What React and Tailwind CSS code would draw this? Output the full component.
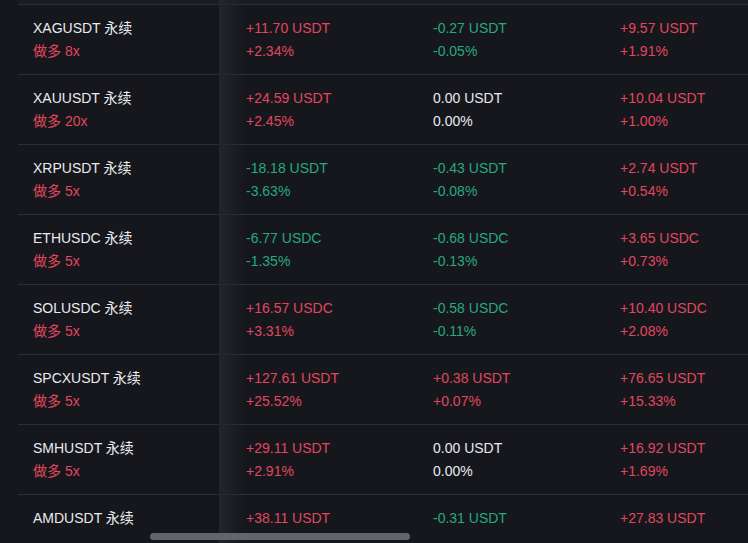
import React from "react";

const R = "text-[#e0475f]";
const G = "text-[#27a97e]";
const W = "text-[#e9eaee]";

const rows = [
  { sym: "XAGUSDT", lev: "8x", c: [["+11.70 USDT", "+2.34%", R], ["-0.27 USDT", "-0.05%", G], ["+9.57 USDT", "+1.91%", R]] },
  { sym: "XAUUSDT", lev: "20x", c: [["+24.59 USDT", "+2.45%", R], ["0.00 USDT", "0.00%", W], ["+10.04 USDT", "+1.00%", R]] },
  { sym: "XRPUSDT", lev: "5x", c: [["-18.18 USDT", "-3.63%", G], ["-0.43 USDT", "-0.08%", G], ["+2.74 USDT", "+0.54%", R]] },
  { sym: "ETHUSDC", lev: "5x", c: [["-6.77 USDC", "-1.35%", G], ["-0.68 USDC", "-0.13%", G], ["+3.65 USDC", "+0.73%", R]] },
  { sym: "SOLUSDC", lev: "5x", c: [["+16.57 USDC", "+3.31%", R], ["-0.58 USDC", "-0.11%", G], ["+10.40 USDC", "+2.08%", R]] },
  { sym: "SPCXUSDT", lev: "5x", c: [["+127.61 USDT", "+25.52%", R], ["+0.38 USDT", "+0.07%", R], ["+76.65 USDT", "+15.33%", R]] },
  { sym: "SMHUSDT", lev: "5x", c: [["+29.11 USDT", "+2.91%", R], ["0.00 USDT", "0.00%", W], ["+16.92 USDT", "+1.69%", R]] },
  { sym: "AMDUSDT", lev: null, c: [["+38.11 USDT", null, R], ["-0.31 USDT", null, G], ["+27.83 USDT", null, R]] },
];

export default function App() {
  return (
    <div
      className="relative w-[748px] h-[543px] overflow-hidden bg-[#16171c] text-[14px]"
      style={{ fontFamily: '"Liberation Sans", "Noto Sans CJK SC", sans-serif' }}
    >
      <div className="h-[5px] bg-[#1b1c22] border-b border-[#2c2e35] ml-[18px]" />
      {rows.map((r) => (
        <div key={r.sym} className="ml-[18px] h-[70px] border-b border-[#2c2e35] flex items-start pt-[12px] whitespace-nowrap">
          <div className="w-[202px] shrink-0 pl-[15px] leading-[23px]">
            <div className={W}>{r.sym} 永续</div>
            {r.lev && <div className={R}>做多 {r.lev}</div>}
          </div>
          <div className="flex pl-[26px]">
            {r.c.map((c, i) => (
              <div key={i} className={`w-[187px] shrink-0 leading-[23px] ${c[2]}`}>
                <div>{c[0]}</div>
                {c[1] && <div>{c[1]}</div>}
              </div>
            ))}
          </div>
        </div>
      ))}
      <div className="absolute top-0 bottom-0 left-[219px] w-[26px] bg-gradient-to-r from-[#23252d] to-transparent" />
      <div className="absolute left-[150px] top-[533px] w-[260px] h-[7px] rounded-full bg-[#62656c]" />
    </div>
  );
}
